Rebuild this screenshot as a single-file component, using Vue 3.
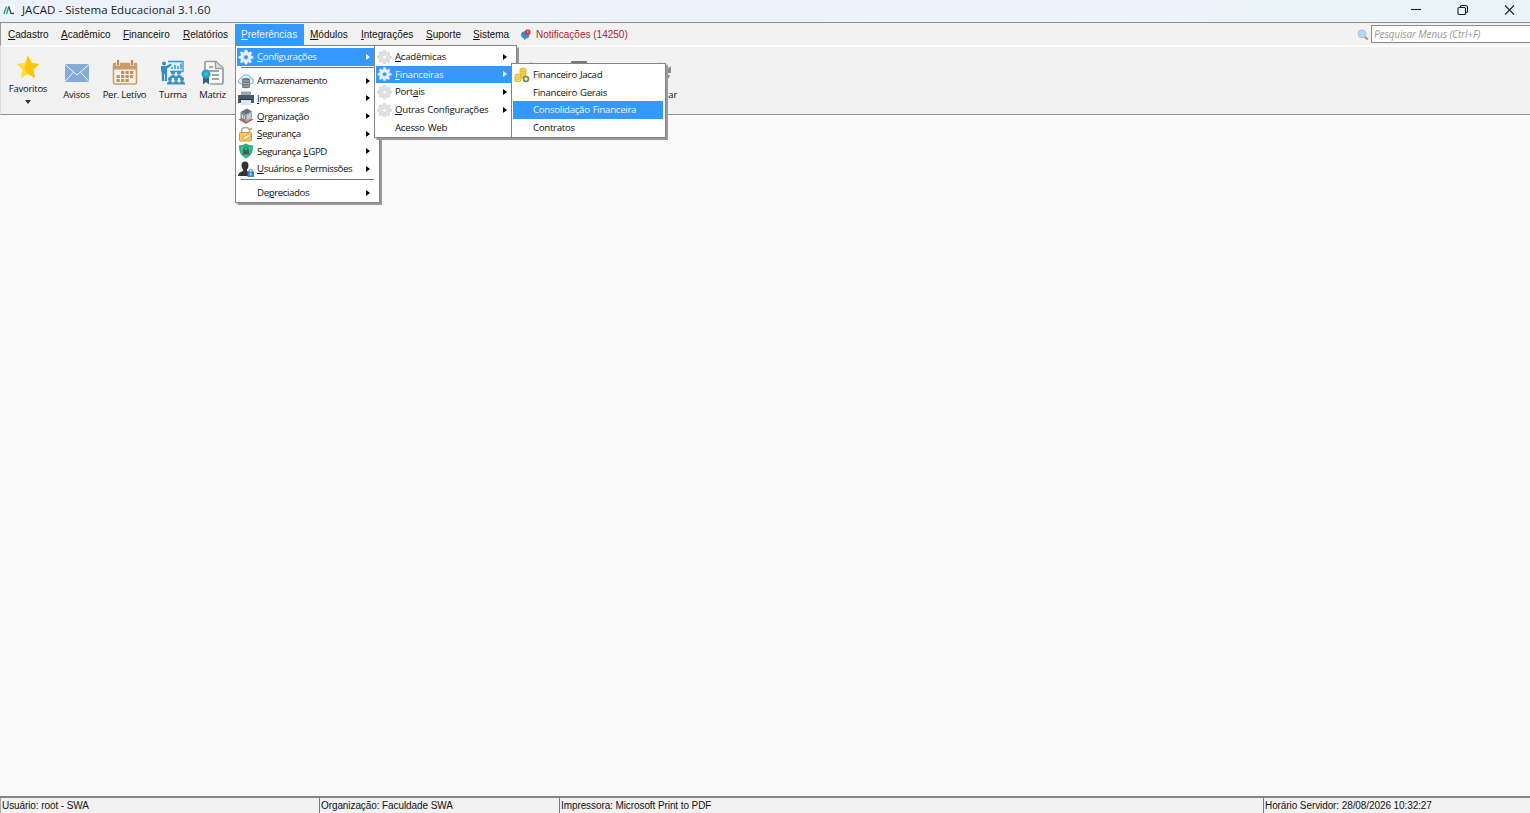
<template>
  <div class="window">
    <header class="titlebar">
      <svg class="logo" viewBox="0 0 12 12">
        <rect width="12" height="12" rx="1" fill="#fff" />
        <path d="M.8 10L3.500 2.500M3.500 10L5.800 2.500" stroke="#25a98b" stroke-width="1.500" fill="none" />
        <path d="M5.800 2.500L8 9.500H11" stroke="#23504b" stroke-width="1.300" fill="none" />
      </svg>
      <span class="title">JACAD - Sistema Educacional 3.1.60</span>
      <div class="controls">
        <svg viewBox="0 0 12 12"><path d="M1 5.500H11" /></svg>
        <svg viewBox="0 0 12 12">
          <rect x="1" y="3.500" width="7.500" height="7" rx="1" />
          <path d="M3.500 3.500V2.500Q3.500 1.500 4.500 1.500H8.500Q10.500 1.500 10.500 3.500V7.500Q10.500 8.500 9 8.500" />
        </svg>
        <svg viewBox="0 0 12 12"><path d="M1 1.500L10 10.500M10 1.500L1 10.500" /></svg>
      </div>
    </header>

    <nav class="menubar">
      <span
        v-for="m in menus"
        :key="m.text"
        class="menu"
        :class="{ open: m.open }"
        :style="{ width: m.width + 'px' }"
      ><u>{{ m.text[0] }}</u>{{ m.text.slice(1) }}</span>
      <span class="notice">
        <svg viewBox="0 0 12 12">
          <path d="M1 5Q1.500 2.500 5 2L9.500 6Q9 9.500 6 9.500L4.500 11.500L4 9.500Q1 8.500 1 5Z" fill="#3b8fd0" />
          <rect x="5" y=".5" width="5.500" height="5.500" rx="2" fill="#e2383c" />
          <path d="M7.700 1.700V4" stroke="#fff" stroke-width=".5" />
        </svg>
        Notificações (14250)
      </span>
      <div class="search">
        <svg viewBox="0 0 12 12">
          <path d="M7.500 7.500L10.800 10.600" stroke="#c98a4b" stroke-width="2" />
          <circle cx="5" cy="4.800" r="3.900" fill="#b5d7f7" stroke="#9dc0e8" />
        </svg>
        <div class="field">Pesquisar Menus (Ctrl+F)</div>
      </div>
    </nav>

    <div class="toolbar">
      <div class="tool fav">
        <svg width="24" height="24" viewBox="0 0 24 24">
          <path d="M12 .5L15.500 8L23.500 9L17.500 14.500L19 23L12 19L5 23L6.500 14.500L.5 9L8.500 8Z" fill="#ffdc3c" />
          <path d="M12 .5L15.500 8L23.500 9L17.500 14.500L19 23L12 19L8.500 14Z" fill="#fdc60b" />
        </svg>
        <span>Favoritos</span>
        <i class="caret"></i>
      </div>
      <div class="tool avisos">
        <svg width="24" height="26" viewBox="0 0 24 26">
          <rect y="4" width="24" height="18" fill="#86abd9" />
          <path d="M0 4.500L12 15L24 4.500M0 21.500L8.500 12M24 21.500L15.500 12" stroke="#f3f6fa" fill="none" />
        </svg>
        <span>Avisos</span>
      </div>
      <div class="tool letivo">
        <svg width="26" height="26" viewBox="0 0 26 26">
          <rect x="1.500" y="3.500" width="23" height="20.500" rx="1.500" fill="#f7f2ec" stroke="#cc9b6b" stroke-width="1.600" />
          <path d="M1 3H25V9.500H1Z" fill="#cc9b6b" />
          <path d="M6 1V6M20 1V6" stroke="#f0e2d3" stroke-width="4" />
          <path d="M6 0V5.500M20 0V5.500" stroke="#bd8752" stroke-width="2" />
          <path d="M9 12.500H22M4.500 16.500H22M4.500 20.500H18" stroke="#c39063" stroke-width="2.800" stroke-dasharray="3.300 1.200" />
        </svg>
        <span>Per. Letívo</span>
      </div>
      <div class="tool turma">
        <svg width="26" height="26" viewBox="0 0 26 26" fill="#368fc4">
          <path d="M8 1.500H23V11.500H10" fill="#dceef7" stroke="#3998ca" stroke-width="1.300" />
          <path d="M12 9V7M15 9V5M18 9V6M21 9V3.500" stroke="#3998ca" stroke-width="1.500" />
          <circle cx="4" cy="3.500" r="2" />
          <path d="M1 6H6L11 3.500L11.500 5.500L7 8.500V21H4.800V14H4V21H1.800V13L1 11Z" />
          <circle cx="13" cy="12.800" r="2" /><circle cx="19" cy="12.800" r="2" />
          <path d="M10 18Q10 15 13 15T16 18Q16 15 19 15T22 18Z" />
          <circle cx="10" cy="19" r="2" /><circle cx="16" cy="19" r="2" /><circle cx="22" cy="19" r="2" />
          <path d="M7 24.500Q7 21 10 21T13 24.500Q13 21 16 21T19 24.500Q19 21 22 21T25 24.500Z" />
        </svg>
        <span>Turma</span>
      </div>
      <div class="tool matriz">
        <svg width="24" height="26" viewBox="0 0 24 26">
          <path d="M4 11V3Q4 1.500 6 1.500H15L22 8V22Q22 24 20 24H9" fill="#f8f8f8" stroke="#9a9da0" stroke-width="1.700" />
          <path d="M14.500 2V8.500H22" fill="#ddd" stroke="#9a9da0" stroke-width="1.300" />
          <path d="M8 7H12M8 11H18M11 15H18M11 19H18" stroke="#85898c" stroke-width="1.500" />
          <path d="M2 16V24.500L5 22L8 24.500V16Z" fill="#43606f" />
          <circle cx="5" cy="14" r="4.500" fill="#25a0d0" />
          <circle cx="5" cy="14" r="2" fill="#48b9df" />
        </svg>
        <span>Matriz</span>
      </div>
      <svg class="leaf" width="12" height="12" viewBox="0 0 12 12">
        <path d="M6 0L12 6L6 12L0 6Z" fill="#4b9a8b" />
      </svg>
      <svg class="monitor" width="16" height="16" viewBox="0 0 16 16">
        <rect width="16" height="13" rx="1" fill="#77797b" />
        <path d="M4 15H12" stroke="#777" />
      </svg>
      <div class="tool atualizar">
        <svg width="24" height="26" viewBox="0 0 24 26">
          <path d="M20 8A9 9 0 1 0 21 15" fill="none" stroke="#888" stroke-width="2" />
          <path d="M23 6V13H16Z" fill="#888" />
        </svg>
        <span>Atualizar</span>
      </div>
    </div>

    <main class="desktop"></main>

    <footer class="status">
      <span class="user">Usuário: root - SWA</span>
      <span class="org">Organização: Faculdade SWA</span>
      <span class="printer">Impressora: Microsoft Print to PDF</span>
      <span class="clock">Horário Servidor: 28/08/2026 10:32:27</span>
    </footer>

    <div v-for="p in popups" :key="p.name" class="popup" :class="p.name">
      <template v-for="(it, i) in p.items" :key="i">
        <hr v-if="it.sep" />
        <div v-else class="item" :class="{ active: it.active }">
          <svg class="icon" viewBox="0 0 16 16">
            <g v-if="it.icon === 'gear'" :fill="it.active ? '#e9f1fa' : '#e2e2e2'" :stroke="it.active ? '#c6dcf4' : '#bdbdbd'" stroke-width=".5">
              <path d="M6.800 1H9.200L9.600 3L11.100 3.600L12.800 2.500L14 4.200L12.700 5.800L13.200 7L15.200 7.300V9.300L13.200 9.700L12.600 11.100L13.700 12.800L12.200 14L10.600 12.900L9.500 13.400L9 15.300H7L6.500 13.400L5.200 12.900L3.500 14L2 12.600L3.100 11L2.600 9.600L.7 9.200V7.200L2.700 6.800L3.200 5.500L2.100 3.800L3.600 2.400L5.200 3.500L6.400 3Z" />
              <circle cx="8" cy="8.200" r="2.200" :fill="it.active ? '#3399ff' : '#fff'" />
            </g>
            <g v-else-if="it.icon === 'cloud'">
              <path d="M3 11Q0 10.500 .5 7.500Q1.500 5 3.500 5Q5 1.300 9 1.800Q12 2.300 12.800 5Q16 5.500 15.500 8.500Q15 11 12.500 11Z" fill="#d5f0f9" stroke="#6fb5ce" />
              <path d="M4 6Q8 4 12 6V14.500Q8 16 4 14.500Z" fill="#6c7478" />
              <path d="M4.500 8H11.500M4.500 10.500H11.500M4.500 13H11.500" stroke="#bfc7ca" stroke-width=".8" />
            </g>
            <g v-else-if="it.icon === 'printer'">
              <path d="M3 1.500H13V7H3Z" fill="#9aa8b4" />
              <path d="M0 5H16V13H0Z" fill="#455b6d" />
              <path d="M3 10H13V15H3Z" fill="#dce7f0" />
              <path d="M2 9.500H14" stroke="#23343f" />
            </g>
            <g v-else-if="it.icon === 'building'">
              <path d="M.5 11.500L8 8L15.500 11.500L8 15.800Z" fill="#b95850" />
              <path d="M2.500 4L8 6.500V14L2.500 11Z" fill="#7f8b93" />
              <path d="M8 6.500L14 3.500V11L8 14Z" fill="#a9b1b6" />
              <path d="M2.500 4L9 .5L14 3.500L8 6.500Z" fill="#62717b" />
              <path d="M4.300 6.500V10M6.300 7.500V11M10 7V11M12 6V10" stroke="#e8edf0" />
            </g>
            <g v-else-if="it.icon === 'lock'">
              <path d="M3.500 8V5Q3.500 1.500 7.500 1.500T11.500 5V8" fill="none" stroke="#b3ad95" stroke-width="1.500" />
              <rect x="1.500" y="6.500" width="12" height="8.500" rx="1" fill="#f8c959" stroke="#d69c32" />
              <path d="M4 12L11 8L13 10L7 13.500Z" fill="#fff3cf" stroke="#bd802d" stroke-width=".6" />
              <path d="M11 4L14 2" stroke="#d98f2b" stroke-width="1.500" />
            </g>
            <g v-else-if="it.icon === 'shield'">
              <path d="M8 .5Q11 2.500 15 2.500Q15.500 12 8 15.500Q.5 12 1 2.500Q5 2.500 8 .5Z" fill="#27ae77" />
              <path d="M8 2.500Q10.500 4 13.500 4Q13.500 11 8 14Q2.500 11 2.500 4Q5.500 4 8 2.500Z" fill="#3fc58f" />
              <path d="M6 7V5.500Q6 4 8 4T10 5.500V7" fill="none" stroke="#41655e" stroke-width="1.200" />
              <rect x="4.800" y="6.700" width="6.400" height="5" fill="#41655e" />
            </g>
            <g v-else-if="it.icon === 'user'">
              <path d="M3.500 4.500Q3.500 .5 7 .5T10.500 4.500Q10.500 7.500 9 8.500V10Q12.500 11 12.500 15H0Q0 11.500 5 10V8.500Q3.500 7 3.500 4.500Z" fill="#333" />
              <rect x="9.500" y="10.500" width="6.500" height="5.500" fill="#278bc8" />
              <path d="M11.200 11V9Q12.700 7.500 14.300 9V11" fill="none" stroke="#278bc8" />
              <path d="M12.800 12V14.500" stroke="#fff" />
            </g>
            <g v-else-if="it.icon === 'coins'">
              <path d="M6 2Q9.500 0 12 2V11H6Z" fill="#f5cf44" stroke="#d0a428" stroke-width=".7" />
              <path d="M1 8Q4 6 7 8V14Q4 16 1 14Z" fill="#f9da5d" stroke="#d0a428" stroke-width=".7" />
              <path d="M6 4.500H12M6 7H12M1 10H7M1 12H7" stroke="#e2b538" stroke-width=".7" />
              <circle cx="12" cy="12" r="3.300" fill="#69963b" />
              <path d="M10.200 12H13.800M12 10.200V13.800" stroke="#fff" stroke-width="1.200" />
            </g>
          </svg>
          <span>{{ it.text.slice(0, it.key) }}<u>{{ it.text.slice(it.key, it.key + 1) }}</u>{{ it.text.slice(it.key + 1) }}</span>
          <i v-if="it.sub" class="arrow"></i>
        </div>
      </template>
    </div>
  </div>
</template>

<script setup>
const menus = [
  { text: 'Cadastro', width: 53 },
  { text: 'Acadêmico', width: 62 },
  { text: 'Financeiro', width: 60 },
  { text: 'Relatórios', width: 58 },
  { text: 'Preferências', width: 69, open: true },
  { text: 'Módulos', width: 51 },
  { text: 'Integrações', width: 65 },
  { text: 'Suporte', width: 47 },
  { text: 'Sistema', width: 50 },
]

// key = position of the mnemonic letter, past the end when there is none
const popups = [
  {
    name: 'preferences',
    items: [
      { text: 'Configurações', key: 0, icon: 'gear', sub: true, active: true },
      { sep: true },
      { text: 'Armazenamento', key: 99, icon: 'cloud', sub: true },
      { text: 'Impressoras', key: 0, icon: 'printer', sub: true },
      { text: 'Organização', key: 0, icon: 'building', sub: true },
      { text: 'Segurança', key: 0, icon: 'lock', sub: true },
      { text: 'Segurança LGPD', key: 10, icon: 'shield', sub: true },
      { text: 'Usuários e Permissões', key: 0, icon: 'user', sub: true },
      { sep: true },
      { text: 'Depreciados', key: 2, sub: true },
    ],
  },
  {
    name: 'config',
    items: [
      { text: 'Acadêmicas', key: 0, icon: 'gear', sub: true },
      { text: 'Financeiras', key: 0, icon: 'gear', sub: true, active: true },
      { text: 'Portais', key: 4, icon: 'gear', sub: true },
      { text: 'Outras Configurações', key: 0, icon: 'gear', sub: true },
      { text: 'Acesso Web', key: 99 },
    ],
  },
  {
    name: 'finance',
    items: [
      { text: 'Financeiro Jacad', key: 99, icon: 'coins' },
      { text: 'Financeiro Gerais', key: 99 },
      { text: 'Consolidação Financeira', key: 99, active: true },
      { text: 'Contratos', key: 99 },
    ],
  },
]
</script>

<style>
body {
  margin: 0;
  overflow: hidden;
}
</style>

<style scoped>
* {
  box-sizing: border-box;
}
.window {
  position: relative;
  display: flex;
  flex-direction: column;
  height: 813px;
  background: #f9f9f9;
  color: #111;
  font: 10px "Liberation Sans", Arial, sans-serif;
  white-space: nowrap;
}
.titlebar {
  display: flex;
  align-items: center;
  height: 23px;
  padding: 0 14px 3px 3px;
  border-bottom: 1px solid #8c8f92;
  background: linear-gradient(90deg, #edf2fa, #edf3fb 70%, #e9f4f6);
}
.logo {
  width: 12px;
  height: 12px;
  margin-right: 7px;
}
.title {
  font: 11.5px "Open Sans", sans-serif;
  letter-spacing: 0.03px;
  color: #1c1c1c;
}
.controls {
  display: flex;
  gap: 35px;
  margin-left: auto;
}
.controls svg {
  width: 12px;
  height: 12px;
  fill: none;
  stroke: #222;
  stroke-width: 1.1;
}
.menubar {
  display: flex;
  align-items: center;
  height: 24px;
  padding: 1px 0 0 1px;
  border-left: 1px solid #999;
  border-bottom: 2px solid #fff;
  background: #f2f2f2;
}
.menu {
  height: 21px;
  padding-left: 6px;
  line-height: 22px;
}
.menu.open {
  background: #3399ff;
  color: #e8f3ff;
}
u {
  text-underline-offset: 1px;
}
.notice {
  display: flex;
  align-items: center;
  gap: 4px;
  margin-left: 3px;
  color: #b2222f;
}
.notice svg,
.search svg {
  width: 12px;
  height: 12px;
}
.search {
  display: flex;
  align-items: center;
  gap: 2px;
  margin-left: auto;
}
.field {
  width: 159px;
  height: 18px;
  margin-top: -1px;
  padding-left: 2px;
  border: 1px solid #8a8a8a;
  border-right: 0;
  background: #fff;
  color: #999;
  font: italic 10px/16px "Open Sans", sans-serif;
  letter-spacing: -0.12px;
}
.toolbar {
  display: flex;
  align-items: flex-start;
  height: 68px;
  border-bottom: 1px solid #8f8f8f;
  border-left: 1px solid #ddd;
  background: #f2f2f2;
  font: 9.5px/12px "Open Sans", sans-serif;
  letter-spacing: -0.25px;
}
.tool {
  display: flex;
  flex-direction: column;
  align-items: center;
  padding-top: 13px;
}
.tool span {
  margin-top: 3px;
}
.fav {
  width: 54px;
  padding-top: 8px;
}
.fav span {
  margin-top: 4px;
}
.caret {
  margin-top: 5px;
  border: 3px solid transparent;
  border-top: 4px solid #26374a;
  border-bottom: 0;
}
.avisos {
  width: 43px;
}
.letivo {
  width: 53px;
}
.turma {
  width: 44px;
}
.matriz {
  width: 35px;
}
.leaf {
  margin: 15px 0 0 295px;
}
.monitor {
  margin: 14px 0 0 34px;
}
.atualizar {
  width: 46px;
  margin-left: 48px;
}
.atualizar svg {
  margin-left: 3px;
}
.atualizar span {
  letter-spacing: 0;
}
.desktop {
  flex: 1;
  border-top: 1px solid #fff;
}
.status {
  display: flex;
  height: 17px;
  border-top: 2px solid #858585;
  background: #f2f2f2;
  line-height: 15px;
  letter-spacing: -0.09px;
}
.status span {
  padding-left: 1px;
  border-left: 1px solid #777;
}
.status .user {
  width: 319px;
  border-left-color: #aaa;
}
.org {
  width: 240px;
}
.printer {
  width: 704px;
}
.clock {
  flex: 1;
}
.popup {
  position: absolute;
  padding: 2px 1px;
  border: 1px solid #858585;
  background: #fff;
  box-shadow: 1px 1px 1px 0.5px #999;
  font: 9.7px/17px "Open Sans", sans-serif;
  word-spacing: 0.8px;
}
.preferences {
  left: 235px;
  top: 45px;
  width: 145px;
  height: 158px;
  letter-spacing: -0.4px;
}
.config {
  left: 374px;
  top: 45px;
  width: 143px;
  height: 93px;
  letter-spacing: -0.27px;
}
.finance {
  left: 511px;
  top: 63px;
  width: 155px;
  height: 75px;
  padding-right: 2px;
  letter-spacing: -0.31px;
}
.item {
  display: flex;
  align-items: center;
  height: 17.6px;
  padding: 0 8px 0 1px;
}
.item.active {
  background: #3399ff;
  color: #e8f3ff;
}
.icon {
  width: 16px;
  height: 16px;
  margin-right: 3px;
}
.config .icon {
  width: 15px;
}
.arrow {
  margin-left: auto;
  border: 3.500px solid transparent;
  border-left: 4px solid #000;
  border-right: 0;
}
.active .arrow {
  border-left-color: #fff;
}
hr {
  height: 1px;
  margin: 1px 4px 4.500px;
  border: 0;
  background: #777;
}
</style>
